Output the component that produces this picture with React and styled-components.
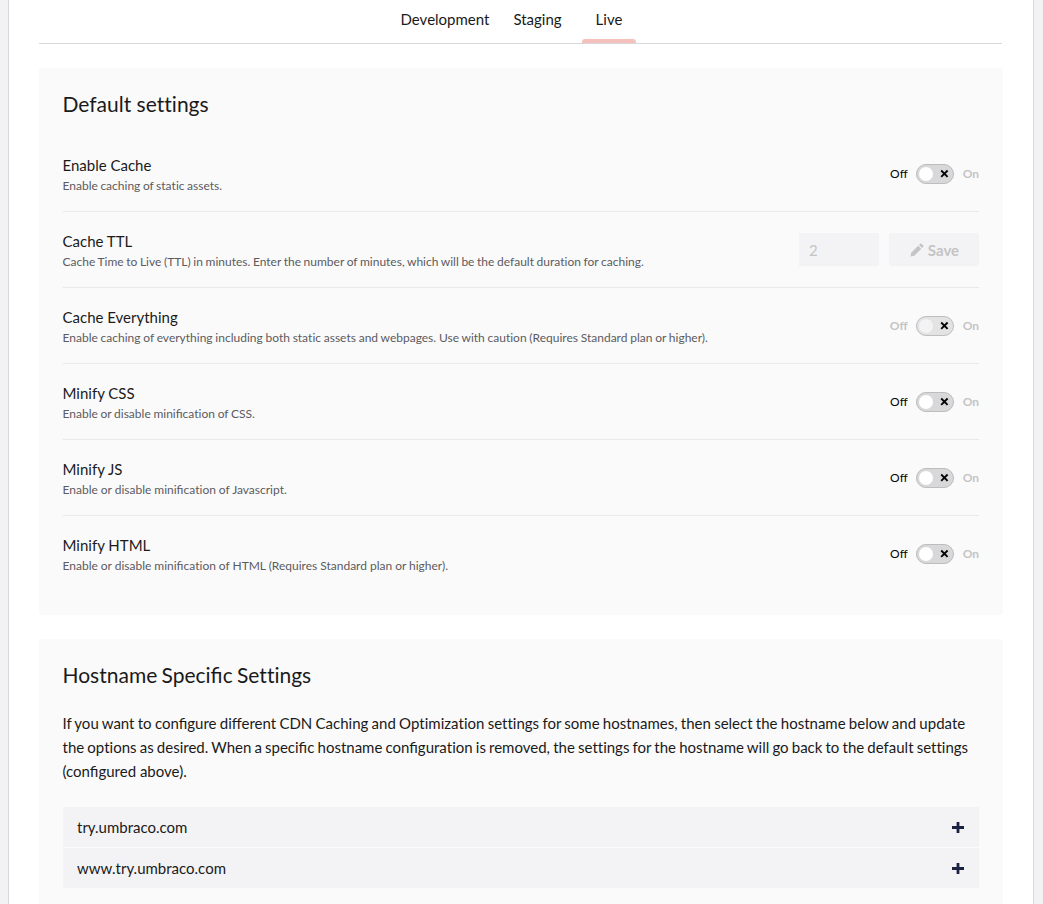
import React from "react";
import styled, { createGlobalStyle, css } from "styled-components";

const GlobalStyle = createGlobalStyle`
  *, *::before, *::after { box-sizing: border-box; }
  html, body { margin: 0; height: 100%; overflow: hidden; }
  body {
    background: #f2f2f4;
    color: #1a1a1a;
    font-family: Lato, "Liberation Sans", sans-serif;
    font-size: 15px;
    line-height: 24px;
  }
`;

const Page = styled.main`
  width: 1024px;
  height: 904px;
  margin-left: 9px;
  padding: 0 30px;
  overflow: hidden;
  background: #fff;
  box-shadow: 0 0 0 1px #d8d7d9;
  clip-path: inset(0 -2px);
`;

const Tabs = styled.nav`
  display: flex;
  justify-content: center;
  width: 963px;
  height: 44px;
  padding-right: 8px;
  border-bottom: 1px solid #d8d7d9;
`;

const Tab = styled.button`
  display: flex;
  flex-direction: column;
  justify-content: space-between;
  align-items: center;
  width: ${(p) => p.$width}px;
  height: 44px;
  padding: 7px 0 0;
  border: 0;
  background: none;
  color: inherit;
  font: inherit;

  &::after {
    content: "";
    width: 54px;
    height: 4px;
    margin-bottom: ${(p) => (p.$active ? "1px" : 0)};
    border-radius: 3px 3px 0 0;
    background: ${(p) => (p.$active ? "#f5c1bc" : "transparent")};
  }
`;

const Panel = styled.section`
  width: 964px;
  height: ${(p) => p.$height}px;
  margin-top: 24px;
  padding: 24px;
  border-radius: 3px;
  background: #fafafa;
`;

const Heading = styled.h2`
  margin: 0 0 ${(p) => p.$gap}px;
  font-size: 21px;
  font-weight: 400;
  line-height: 24px;
  text-indent: -0.5px;
  word-spacing: ${(p) => p.$spacing || 0}px;
`;

const Row = styled.div`
  display: flex;
  justify-content: space-between;
  align-items: center;
  height: 76px;
  border-bottom: 1px solid #e9e9eb;

  &:last-child { border-bottom-color: transparent; }
`;

const RowText = styled.div`
  padding-top: 3px;
  text-indent: -0.5px;
`;

const Label = styled.div`
  font-size: 15px;
  line-height: 20px;
`;

const Description = styled.div`
  padding-top: 1px;
  color: #5c5b5f;
  font-size: 12px;
  line-height: 19px;
  height: 20px;
  line-height: 20px;
  word-spacing: ${(p) => p.$spacing}px;
`;

const PlainLigatures = styled.span`
  font-variant-ligatures: none;
`;

const Control = styled.div`
  display: flex;
  align-items: center;
  gap: ${(p) => p.$gap}px;
`;

const ToggleText = styled.span`
  color: ${(p) => (p.$muted ? "#c4c4c4" : "#060606")};
  font-size: 12px;
  font-weight: ${(p) => (p.$muted ? 700 : 400)};
  line-height: 20px;

  &:first-child { margin-right: -1px; }
`;

const Switch = styled.button`
  display: flex;
  justify-content: space-between;
  align-items: center;
  width: 38px;
  height: 20px;
  padding: 0 4px 0 2px;
  border: 1px solid #bdbdbd;
  border-radius: 10px;
  background: ${(p) => (p.disabled ? "#e3e3e4" : "#d8d7d9")};
`;

const Knob = styled.span`
  width: 14px;
  height: 14px;
  border-radius: 50%;
  background: ${(p) => (p.$muted ? "#f3f3f5" : "#fff")};
`;

const disabledField = css`
  height: 33px;
  border: 0;
  background: #f3f3f5;
  color: #c4c4c4;
  font-family: inherit;
  font-size: 15px;
`;

const MinutesInput = styled.input`
  ${disabledField}
  width: 80px;
  padding: 0 10px;
`;

const SaveButton = styled.button`
  ${disabledField}
  display: flex;
  justify-content: center;
  align-items: center;
  gap: 4px;
  width: 90px;
  padding: 0 0 0 1px;
  border-radius: 3px;
  font-weight: 700;
`;

const Intro = styled.p`
  margin: 0 0 24px;
  text-indent: -0.5px;
`;

const IntroLine = styled.span`
  display: block;
  white-space: nowrap;
  word-spacing: ${(p) => p.$spacing}px;
`;

const HostList = styled.div`
  display: flex;
  flex-direction: column;
  gap: 1px;
`;

const HostItem = styled.button`
  display: flex;
  justify-content: space-between;
  align-items: center;
  height: 40px;
  padding: 0 15px 0 14px;
  border: 0;
  background: #f3f3f5;
  color: inherit;
  font: inherit;
`;

const Icon = styled.svg`
  display: block;
  flex: none;
`;

const CrossIcon = () => (
  <Icon width="10" height="10" viewBox="0 0 10 10">
    <path d="M2.2 1.5l6.4 6.4M8.6 1.5L2.2 7.9" stroke="#060606" strokeWidth="1.9" fill="none" />
  </Icon>
);

const PencilIcon = () => (
  <Icon width="14" height="14" viewBox="0 0 14 14" fill="currentColor">
    <path d="M0.5 13.5L1.2 9.7L8.2 2.7L11.3 5.8L4.3 12.8ZM9 1.9L10.2 .7Q10.8 .2 11.4 .7L13.3 2.6Q13.8 3.2 13.3 3.8L12.1 5Z" />
  </Icon>
);

const PlusIcon = () => (
  <Icon width="12" height="12" viewBox="0 0 12 12">
    <path d="M0 6.5h12M6 1v11" stroke="#1b2142" strokeWidth="2.8" fill="none" />
  </Icon>
);

// Keeps the "fi" ligature but draws "tt" and "ti" as separate letters.
function Text({ children }) {
  return children
    .split(/(tt|ti)/)
    .map((part, i) => (i % 2 ? <PlainLigatures key={i}>{part}</PlainLigatures> : part));
}

function Toggle({ disabled = false }) {
  return (
    <Control $gap={9}>
      <ToggleText $muted={disabled}>Off</ToggleText>
      <Switch disabled={disabled} aria-label="Toggle">
        <Knob $muted={disabled} />
        <CrossIcon />
      </Switch>
      <ToggleText $muted>On</ToggleText>
    </Control>
  );
}

const settings = [
  { label: "Enable Cache", text: "Enable caching of static assets.", spacing: -0.5 },
  {
    label: "Cache TTL",
    text: "Cache Time to Live (TTL) in minutes. Enter the number of minutes, which will be the default duration for caching.",
    spacing: -0.45,
    ttl: true,
  },
  {
    label: "Cache Everything",
    text: "Enable caching of everything including both static assets and webpages. Use with caution (Requires Standard plan or higher).",
    spacing: -0.32,
    disabled: true,
  },
  { label: "Minify CSS", text: "Enable or disable minification of CSS.", spacing: -0.4 },
  { label: "Minify JS", text: "Enable or disable minification of Javascript.", spacing: -0.1 },
  {
    label: "Minify HTML",
    text: "Enable or disable minification of HTML (Requires Standard plan or higher).",
    spacing: -0.1,
  },
];

const introLines = [
  {
    text: "If you want to configure different CDN Caching and Optimization settings for some hostnames, then select the hostname below and update",
    spacing: -0.57,
  },
  {
    text: "the options as desired. When a specific hostname configuration is removed, the settings for the hostname will go back to the default settings",
    spacing: -0.7,
  },
  { text: "(configured above).", spacing: 0 },
];

const hostnames = ["try.umbraco.com", "www.try.umbraco.com"];

export default function App() {
  return (
    <>
      <GlobalStyle />
      <Page>
        <Tabs>
          <Tab $width={112}>Development</Tab>
          <Tab $width={73}>Staging</Tab>
          <Tab $width={70} $active>Live</Tab>
        </Tabs>
        <Panel $height={547}>
          <Heading $gap={20}><Text>Default settings</Text></Heading>
          <div>
            {settings.map((s) => (
              <Row key={s.label}>
                <RowText>
                  <Label>{s.label}</Label>
                  <Description $spacing={s.spacing}><Text>{s.text}</Text></Description>
                </RowText>
                {s.ttl ? (
                  <Control $gap={10}>
                    <MinutesInput disabled defaultValue="2" />
                    <SaveButton disabled>
                      <PencilIcon />
                      Save
                    </SaveButton>
                  </Control>
                ) : (
                  <Toggle disabled={s.disabled} />
                )}
              </Row>
            ))}
          </div>
        </Panel>
        <Panel $height={300}>
          <Heading $gap={24} $spacing={-1.1}><Text>Hostname Specific Settings</Text></Heading>
          <Intro>
            {introLines.map((line) => (
              <IntroLine key={line.text} $spacing={line.spacing}>
                <Text>{line.text}</Text>
              </IntroLine>
            ))}
          </Intro>
          <HostList>
            {hostnames.map((h) => (
              <HostItem key={h}>
                {h}
                <PlusIcon />
              </HostItem>
            ))}
          </HostList>
        </Panel>
      </Page>
    </>
  );
}
